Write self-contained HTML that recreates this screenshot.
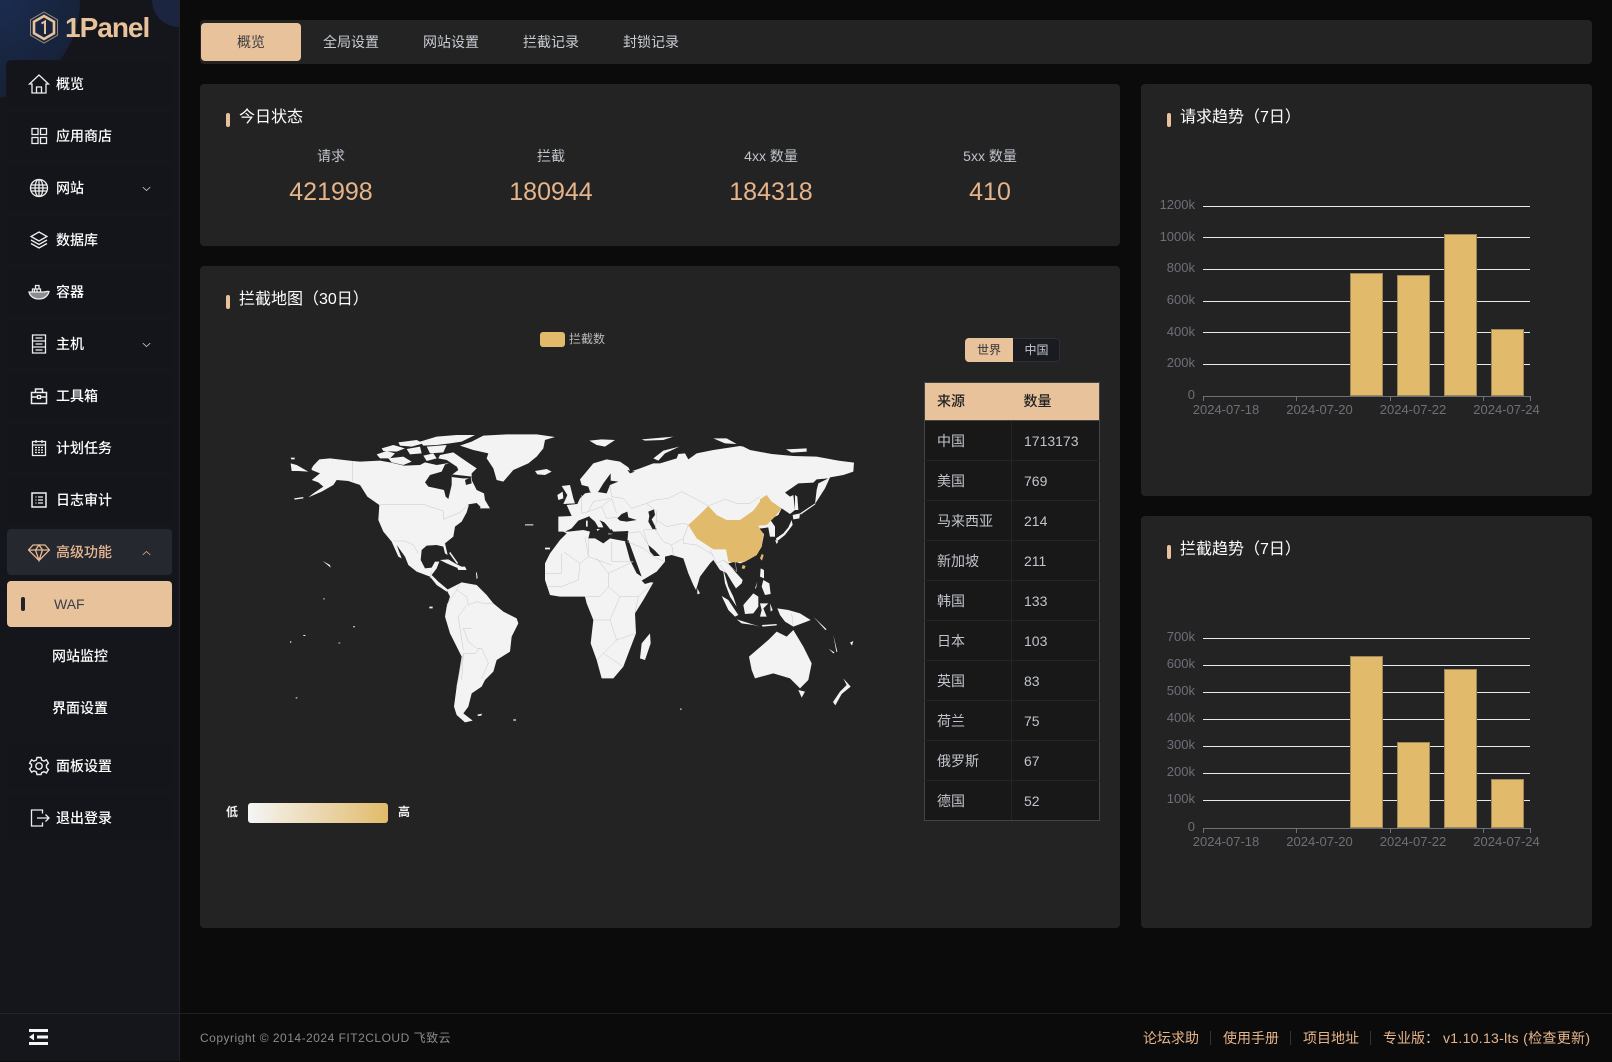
<!DOCTYPE html>
<html lang="zh"><head><meta charset="utf-8"><title>1Panel WAF</title>
<style>
*{box-sizing:border-box;margin:0;padding:0}
html,body{width:1612px;height:1061px;overflow:hidden;background:#0b0b0b;font-family:"Liberation Sans","Noto Sans CJK SC",sans-serif;font-size:14px;color:#fff}
.abs,.side,.card,.tabs,.m,.t{position:absolute}
.side{left:0;top:0;width:180px;height:1061px;background:#14161b;border-right:1px solid #22242a;overflow:hidden}
.blob1{position:absolute;left:-120px;top:-100px;width:200px;height:200px;border-radius:50%;background:radial-gradient(circle at 60% 50%,#1b2c50,#141a26)}
.blob2{position:absolute;left:152px;top:-27px;width:54px;height:54px;border-radius:50%;background:#1b2540}
.logo{position:absolute;left:65px;top:12px;font-size:28px;font-weight:bold;letter-spacing:-1px;color:#e8c29b;line-height:32px}
.m{left:7px;width:165px;height:46px;border-radius:4px;background:#13151a;box-shadow:0 0 0 1px #14171e;line-height:46px;padding-left:49px;color:#fff;font-weight:500}
.m svg.i{position:absolute;left:21px;top:12px;width:22px;height:22px;fill:none;stroke:#eee;stroke-width:1.3}
.m svg.c{position:absolute;left:135px;top:21px;width:9px;height:6px;fill:none;stroke:#ddd;stroke-width:1}
.m.adv{background:#26282f;color:#e8b992}.m.adv svg{stroke:#e8b992}
.m.waf{background:#e8c29b;color:#3a3f4a;font-weight:400;padding-left:47px}
.m.waf:before{content:"";position:absolute;left:14px;top:16px;width:4px;height:14px;border-radius:2px;background:#20232a}
.m.sub{background:none;box-shadow:none;padding-left:45px}
.tabs{left:200px;top:20px;width:1392px;height:44px;background:#232323;border-radius:4px}
.tab{position:absolute;top:3px;width:100px;height:38px;line-height:38px;text-align:center;color:#c8ccd4}
.tab.on{background:#e8c29b;color:#3b3b40;border-radius:4px}
.card{background:#232323;border-radius:4px}
.h{position:absolute;left:26px;top:23px;font-size:16px;line-height:22px;padding-left:13px;color:#fff;white-space:nowrap}
.h:before{content:"";position:absolute;left:0;top:6px;width:4px;height:14px;border-radius:2px;background:#e8c29b}
.stat{position:absolute;top:62px;width:220px;text-align:center}
.stat .l{color:#c0c4cc;line-height:20px}
.stat .v{color:#e6b48a;font-size:25px;line-height:30px;margin-top:11px}
table{position:absolute;left:924px;top:382px;width:176px;border-collapse:collapse;table-layout:fixed;background:#181818;color:#c0c4cc}
th{background:#e8c29b;color:#222;text-align:left;height:38px;padding:0 0 2px 12px;font-weight:500;border:1px solid #444;border-right:0;border-left:0}
th:first-child{border-left:1px solid #444}th:last-child{border-right:1px solid #444}
td{height:40px;padding-left:12px;border:1px solid #252525;line-height:38px}
td:first-child{border-left:1px solid #444}td:last-child{border-right:1px solid #444}
tr:last-child td{border-bottom:1px solid #444}
.foot{position:absolute;left:180px;top:1013px;width:1432px;height:48px;border-top:1px solid #1f1f1f;line-height:48px}
text{font-family:"Liberation Sans","Noto Sans CJK SC",sans-serif}
</style></head><body>

<div class="side">
<div class="blob1"></div><div class="blob2"></div>
<svg class="abs" style="left:29px;top:10px" width="30" height="35" viewBox="0 0 30 35" fill="none"><path d="M15 2 28.5 9.8V25.2L15 33 1.5 25.2V9.8Z" stroke="#9a8a78" stroke-width="1"/><path d="M15 6 25 11.8V23.2L15 29 5 23.2V11.8Z" stroke="#e8c29b" stroke-width="2.6"/><path d="M12.5 13.5 16 11.5V24" stroke="#e8c29b" stroke-width="2"/></svg>
<div class="logo">1Panel</div>

<div class="m" style="top:61px"><svg class="i" viewBox="0 0 22 22"><path d="M1.500 11 11 2l9.500 9h-2.500v9H4v-9ZM8.500 20v-6h5v6"/></svg>概览</div>
<div class="m" style="top:113px"><svg class="i" viewBox="0 0 22 22"><path d="M4 3.500h6v6H4zM12.500 3.500h6v6h-6zM4 12.500h6v6H4zM12.500 12.500h6v6h-6z"/></svg>应用商店</div>
<div class="m" style="top:165px"><svg class="i" viewBox="0 0 22 22"><circle cx="11" cy="11" r="8.500"/><ellipse cx="11" cy="11" rx="4" ry="8.500"/><path d="M11 2.500v17M3 8h16M3 14h16M2.500 11h17"/></svg>网站<svg class="c" viewBox="0 0 12 8"><path d="M1 1.500 6 6l5-4.500"/></svg></div>
<div class="m" style="top:217px"><svg class="i" viewBox="0 0 22 22"><path d="M11 3 19 7.500 11 12 3 7.500ZM3 11l8 4.500 8-4.500M3 14.500 11 19l8-4.500"/></svg>数据库</div>
<div class="m" style="top:269px"><svg class="i" viewBox="0 0 22 22" style="left:20px;width:24px"><path d="M1 11h15c1 0 2.500-1 5-.5-1 4.500-5 7.500-10 7.500-5 0-9-2.500-10-7Z" fill="#eee" fill-opacity=".55"/><path d="M4.500 10.500V8h8v2.500M7.500 8V4.500h3.500V8M6.500 8v2.500M9 8v2.500" stroke-width="1.300"/></svg>容器</div>
<div class="m" style="top:321px"><svg class="i" viewBox="0 0 22 22"><path d="M4.500 2h13v18h-13zM4.500 8h13M4.500 14h13M7.500 5h7M7.500 11h7M7.500 17h7"/></svg>主机<svg class="c" viewBox="0 0 12 8"><path d="M1 1.500 6 6l5-4.500"/></svg></div>
<div class="m" style="top:373px"><svg class="i" viewBox="0 0 22 22"><path d="M3.500 7.500h15v11h-15zM7.500 7.500v-3.500h7v3.500M3.500 12h15" stroke-width="1.500"/><path d="M9.500 10.500h3v3h-3z" fill="#14161b"/></svg>工具箱</div>
<div class="m" style="top:425px"><svg class="i" viewBox="0 0 22 22"><path d="M4.500 4.500h13v14h-13zM4.500 8h13M8 3v3M14 3v3"/><path d="M7 10.500h2M10 10.500h2M13 10.500h2M7 13h2M10 13h2M13 13h2M7 15.500h2M10 15.500h2M13 15.500h2" stroke-width="1.200"/></svg>计划任务</div>
<div class="m" style="top:477px"><svg class="i" viewBox="0 0 22 22"><path d="M4 4h14v14H4z" stroke-width="1.500"/><path d="M7.500 8h1M10 8h5M7.500 11h1M10 11h5M7.500 14h1M10 14h5"/></svg>日志审计</div>
<div class="m adv" style="top:529px"><svg class="i" viewBox="0 0 22 22"><path d="M5 4h12l4.500 5L11 19.500.5 9ZM.5 9h21M7.500 9 11 19.500 14.500 9 11 4 7.500 9"/></svg>高级功能<svg class="c" viewBox="0 0 12 8"><path d="M1 6.500 6 2l5 4.500"/></svg></div>
<div class="m waf" style="top:581px">WAF</div>
<div class="m sub" style="top:633px">网站监控</div>
<div class="m sub" style="top:685px">界面设置</div>
<div class="m" style="top:743px"><svg class="i" viewBox="0 0 22 22"><path d="M9 2.500h4l.7 2.600 2.400 1 2.300-1.300 2 3.400-1.900 1.900v2.600l1.900 1.900-2 3.400-2.300-1.300-2.400 1L13 19.500H9l-.7-2.600-2.400-1-2.300 1.300-2-3.400 1.900-1.900v-2.600L1.600 8.200l2-3.400 2.300 1.300 2.400-1Z" stroke-width="1.400"/><circle cx="11" cy="11" r="3.200" stroke-width="1.400"/></svg>面板设置</div>
<div class="m" style="top:795px"><svg class="i" viewBox="0 0 22 22"><path d="M14.500 6.500V3h-11v16h11v-3.500M9 11h12M17.500 7.500 21 11l-3.500 3.500"/></svg>退出登录</div>
<div class="abs" style="left:0;top:1013px;width:180px;height:1px;background:#22242a"></div>
<svg class="abs" style="left:29px;top:1029px" width="20" height="17" viewBox="0 0 20 17" fill="#f5f5f5"><path d="M0 0h19v3H0zM0 13h19v3H0zM8 6.500h11v3H8zM5 4.500v7L0 8Z"/></svg>
</div>

<div class="tabs">
<div class="tab on" style="left:1px">概览</div><div class="tab" style="left:101px">全局设置</div><div class="tab" style="left:201px">网站设置</div><div class="tab" style="left:301px">拦截记录</div><div class="tab" style="left:401px">封锁记录</div>
</div>

<div class="card" style="left:200px;top:84px;width:920px;height:162px">
<div class="h">今日状态</div>
<div class="stat" style="left:21px"><div class="l">请求</div><div class="v">421998</div></div>
<div class="stat" style="left:241px"><div class="l">拦截</div><div class="v">180944</div></div>
<div class="stat" style="left:461px"><div class="l">4xx 数量</div><div class="v">184318</div></div>
<div class="stat" style="left:680px"><div class="l">5xx 数量</div><div class="v">410</div></div>
</div>

<div class="card" style="left:200px;top:266px;width:920px;height:662px">
<div class="h">拦截地图（30日）</div>
</div>

<div class="abs" style="left:540px;top:332px;width:25px;height:15px;border-radius:3px;background:#e1bb6b"></div>
<div class="abs" style="left:569px;top:331px;font-size:12px;line-height:16px;color:#bbb">拦截数</div>
<div class="abs" style="left:965px;top:338px;width:95px;height:24px;border:1px solid #2c2f36;border-radius:4px;background:#191b20;font-size:12px;line-height:22px;color:#c0c4cc;text-align:center;padding-left:48px">中国</div>
<div class="abs" style="left:965px;top:338px;width:48px;height:24px;border-radius:4px 0 0 4px;background:#e8c29b;font-size:12px;line-height:24px;color:#333;text-align:center">世界</div>

<!-- map -->
<svg class="abs" style="left:280px;top:420px;filter:blur(.3px)" width="600" height="320" viewBox="0 0 600 320" fill="#f3f3f3">
<g transform="translate(0,5) scale(.33333)">
 <path d="M95 130 100 122 118 103 150 100 218 108 240 110 300 107 330 112 372 122 420 120 435 112 470 120 500 115 530 118 560 120 590 130 575 145 575 165 590 195 612 205 615 225 630 250 600 250 590 240 565 245 560 262 545 290 525 305 520 335 495 355 503 390 495 385 490 365 470 360 440 362 425 375 422 405 435 430 455 428 465 410 478 410 470 430 455 450 475 470 505 495 500 500 470 480 450 455 410 440 385 420 375 395 350 360 365 400 355 395 335 350 310 320 295 285 298 240 262 215 240 180 205 168 170 165 160 180 125 200 85 217 100 205 130 185 115 172 95 165 120 145 95 135Z"/>
 <path fill="#232323" d="M435 172 450 150 485 140 495 118 525 112 535 135 515 150 515 180 505 222 497 215 492 195 470 190 445 185Z"/>
 <path fill="#232323" d="M555 165 572 158 575 175 558 180ZM565 238 590 234 602 246 590 262 570 262ZM515 148 550 152 575 155 572 160 548 160 515 156Z"/>
 <path d="M290 88 320 78 345 85 330 100 300 100ZM305 70 340 60 375 70 350 80 310 78ZM325 100 370 95 395 110 370 120 335 112ZM355 52 410 45 430 55 395 65 360 62ZM380 72 420 65 425 85 390 88ZM420 50 470 35 530 30 585 30 545 50 510 55 470 60 430 62ZM440 65 500 60 490 82 450 85ZM430 92 460 85 470 100 440 108ZM480 90 520 82 560 110 590 130 565 135 530 125 500 105 475 100Z"/>
 <path d="M540 62 575 50 610 32 680 28 770 28 825 36 795 45 790 70 770 95 745 115 700 135 670 170 650 165 640 130 620 100 625 85 580 75Z"/>
 <path d="M765 138 800 132 815 140 795 150 772 148ZM32 115 50 120 85 140 55 138 35 138ZM32 98H44V103H34ZM42 220 70 216 70 220 44 224Z"/>
 <path d="M480 405 505 403 525 415 555 430 530 428 500 415ZM530 425 555 425 560 435 535 435ZM510 380 535 415 530 416 508 385ZM128 408 150 420 152 428 145 422ZM590 440l3 18-3 5-2-18ZM735 298h25v3h-25zM795 368h15v5h-15z"/>
 <g fill="none" stroke="#c8c8c8" stroke-width="1.500"><path d="M218 108V168M300 238H430L490 258 490 283 540 262 565 240M340 348H375L400 360 415 385M455 440 450 460"/></g>
</g>
<g transform="scale(.33333)">
 <path d="M500 510 520 500 545 487 590 495 620 525 640 550 670 575 710 595 715 610 695 650 690 695 650 720 640 755 615 780 605 800 575 820 565 860 550 880 578 902 555 907 530 885 522 860 530 800 545 710 510 640 495 590 500 560 510 530Z"/>
 <path d="M592 884 606 881 604 887 594 888ZM700 898h8v4h-8zM448 560h10v5h-10zM47 832h5v3h-5zM70 645h6v3h-6zM30 664h4v4h-4zM175 668h6v2h-6zM220 618h4v4h-4zM130 535h4v3h-4z"/>
 <g fill="none" stroke="#c8c8c8" stroke-width="1.500"><path d="M540 490 530 510 560 530 565 555 590 545 610 550 640 550M530 510 500 555M560 555 535 590 540 625 550 690M575 625 550 625 565 665 590 685 605 685 625 730 605 775M600 685 585 700 550 700 545 780M550 700 530 800"/></g>
</g>
<g transform="translate(260,10) scale(.33333)">
 <path d="M80 225 112 222 120 205 135 190 165 185 200 190 210 165 235 155 212 152 212 130 190 160 175 185 160 190 150 185 145 170 125 165 120 148 160 100 200 88 240 95 265 112 272 125 300 115 340 100 360 100 410 85 415 72 435 70 445 88 470 70 520 60 600 48 610 50 630 60 695 72 760 78 830 80 895 92 942 98 940 125 910 135 870 142 855 175 825 222 830 180 835 160 865 145 830 148 820 158 775 160 735 188 750 200 760 195 765 240 750 252 725 235 715 255 690 268 705 290 705 320 690 320 685 292 665 295 650 295 672 312 665 350 650 375 615 395 600 400 585 395 565 400 585 425 608 450 605 460 588 475 575 455 560 430 552 425 565 470 580 500 590 530 570 500 555 460 550 425 540 420 520 390 510 400 480 440 468 480 460 465 445 430 430 385 395 375 375 380 375 395 350 425 305 452 340 458 310 510 285 550 288 610 265 670 250 710 220 745 185 745 170 690 152 640 160 570 140 520 135 500 100 500 60 500 30 495 15 450 15 400 30 370 60 330 80 310 70 305 55 305 55 260 95 258Z"/>
 <path fill="#232323" d="M75 305 95 295 115 272 150 258 200 280 220 305 265 303 262 335 235 330 210 325 190 340 165 325 145 325 150 305 130 300 85 305ZM232 265 245 252 262 245 265 262 290 270 260 275 240 272ZM325 245 342 238 345 255 335 268 350 298 338 298 325 275 328 258ZM325 345 345 362 360 378 342 378 330 365ZM255 335 265 330 285 385 305 440 290 430 270 390ZM305 452 350 445 355 450 315 462ZM262 120 285 125 270 130Z"/>
 <path d="M145 252 165 250 185 280 190 292 175 292 165 275 150 262ZM170 255 205 262 220 275 212 300 200 285 180 262ZM170 297H180L172 303ZM138 272H143V290H138ZM205 310 220 312 205 313Z"/>
 <path d="M65 168 90 165 100 205 105 220 70 222 82 195ZM52 195 68 185 70 205 55 210Z"/>
 <path d="M340 85 370 62 418 50 375 70 355 92ZM148 32 185 28 225 30 195 50 170 45ZM305 28 400 20 370 30 315 32ZM520 25 560 25 590 42 555 40ZM738 58 800 55 800 65 755 68Z"/>
 <g fill="none" stroke="#c8c8c8" stroke-width="1.500"><path d="M210 165 215 200 250 205 275 235 320 220 345 210 385 205 425 185 470 208 505 228 555 208 590 220 630 220 660 200M320 220 350 245 350 270 380 290 430 280 445 285M350 270 345 298 370 335 395 345 430 325 445 285M345 298 310 300 325 345M395 345 400 375M430 325 430 340 470 345 520 375M262 310 300 305 325 345M262 335 310 355 340 380 375 395M125 195 125 250 145 245 185 230 215 205M145 245 160 215 210 205M185 230 200 265 235 262M230 250 215 205M215 335 215 395 280 395M145 325 145 380 215 405M135 320 145 380 120 400 70 365M65 370 65 430 15 430M120 400 115 450 65 470 25 470M170 385 205 430 205 470 180 500 140 500M205 430 280 395M205 470 240 500 295 500 340 458M240 500 210 570 160 570M210 570 230 630 288 610M230 630 190 670 250 710M190 670 170 690M295 500 285 550"/></g>
</g>
<g transform="translate(420,20) scale(.33333)">
 <path d="M285 165 292 170 295 210 285 210ZM278 225 300 220 298 235 280 238ZM275 240 278 255 255 285 230 305 228 295 250 280 265 262ZM225 300 235 305 230 312ZM210 250 225 260 225 290 210 290 205 262Z"/>
 <path d="M182 385 192 390 192 415 180 410ZM190 420 208 430 212 462 195 465 185 440ZM172 425 165 445 168 445ZM130 495 160 460 175 470 175 500 160 520 135 522ZM180 490 205 490 190 505 200 530 180 530 185 510ZM65 468 85 480 115 525 105 530 85 510ZM110 538 180 560 160 555 125 550ZM185 555 230 552 230 556 188 560ZM210 490 218 510 212 515ZM232 505 265 510 300 520 332 540 320 545 280 560 255 545 240 525ZM340 530 380 568 376 570ZM300 220 345 190 346 193 302 224Z"/>
 <g fill="none" stroke="#c8c8c8" stroke-width="1.500"><path d="M30 330 50 370 70 360 85 370M60 375 80 400M70 360 110 395 105 360M275 520 280 560"/></g>
</g>
<g transform="translate(280,0) scale(.33333)">
 <path d="M412 505 420 520 412 523ZM270 640 272 670 255 720 240 715 245 670Z"/>
 <path d="M567 710 590 690 625 660 650 635 680 650 700 630 730 680 755 730 745 780 720 805 690 775 640 760 585 775 575 750Z"/>
 <path d="M715 810 735 815 725 833ZM850 775 872 800 845 822 826 856 819 846 840 815 860 795ZM820 645l12 50-3 1zM806 686l18 12-4 2zM870 668l10-5-4 14zM360 866h5v3h-5z"/>
</g>
<g transform="translate(260,10) scale(.33333)" fill="#e1bb6b">
 <path d="M445 285 470 262 505 228 530 255 560 270 600 270 640 242 660 215 660 208 680 195 695 215 725 235 705 260 680 285 655 287 662 300 670 310 665 350 650 375 615 395 585 397 565 395 558 358 520 358 470 325Z"/>
 <path d="M665 372 671 375 666 392 660 385ZM608 405 617 408 613 417 605 415Z"/>
</g>
</svg>

<div class="abs" style="left:226px;top:804px;font-size:12px;line-height:16px;color:#eee;font-weight:700">低</div>
<div class="abs" style="left:248px;top:803px;width:140px;height:20px;border-radius:3px;background:linear-gradient(90deg,#f5f5f5,#e1bb6b)"></div>
<div class="abs" style="left:398px;top:804px;font-size:12px;line-height:16px;color:#eee;font-weight:700">高</div>

<table>
<colgroup><col style="width:87px"><col></colgroup>
<tr><th>来源</th><th>数量</th></tr>
<tr><td>中国</td><td>1713173</td></tr>
<tr><td>美国</td><td>769</td></tr>
<tr><td>马来西亚</td><td>214</td></tr>
<tr><td>新加坡</td><td>211</td></tr>
<tr><td>韩国</td><td>133</td></tr>
<tr><td>日本</td><td>103</td></tr>
<tr><td>英国</td><td>83</td></tr>
<tr><td>荷兰</td><td>75</td></tr>
<tr><td>俄罗斯</td><td>67</td></tr>
<tr><td>德国</td><td>52</td></tr>
</table>

<div class="card" style="left:1141px;top:84px;width:451px;height:412px"><div class="h">请求趋势（7日）</div></div>
<div class="card" style="left:1141px;top:516px;width:451px;height:412px"><div class="h">拦截趋势（7日）</div></div>

<svg class="abs" style="left:1141px;top:84px" width="451" height="412" viewBox="1141 84 451 412">
<g stroke="#e6e9f0" stroke-width="1"><path d="M1203 206.500H1530M1203 237.500H1530M1203 269.500H1530M1203 301.500H1530M1203 332.500H1530M1203 364.500H1530"/></g>
<g fill="#e1bb6b" stroke="#9d8757" stroke-width="1"><rect x="1350.500" y="273.500" width="32" height="122"/><rect x="1397.500" y="275.500" width="32" height="120"/><rect x="1444.500" y="234.500" width="32" height="161"/><rect x="1491.500" y="329.500" width="32" height="66"/></g>
<path d="M1203 396.500H1530M1203.500 396v5M1296.500 396v5M1390.500 396v5M1483.500 396v5M1530.500 396v5" stroke="#6e7079" fill="none"/>
<g fill="#6e7079" font-size="13" text-anchor="end"><text x="1195" y="209">1200k</text><text x="1195" y="241">1000k</text><text x="1195" y="272">800k</text><text x="1195" y="304">600k</text><text x="1195" y="336">400k</text><text x="1195" y="367">200k</text><text x="1195" y="399">0</text></g>
<g fill="#6e7079" font-size="13" text-anchor="middle"><text x="1226" y="414">2024-07-18</text><text x="1319.500" y="414">2024-07-20</text><text x="1413" y="414">2024-07-22</text><text x="1506.500" y="414">2024-07-24</text></g>
</svg>

<svg class="abs" style="left:1141px;top:516px" width="451" height="412" viewBox="1141 516 451 412">
<g stroke="#e6e9f0" stroke-width="1"><path d="M1203 638.500H1530M1203 665.500H1530M1203 692.500H1530M1203 719.500H1530M1203 746.500H1530M1203 773.500H1530M1203 800.500H1530"/></g>
<g fill="#e1bb6b" stroke="#9d8757" stroke-width="1"><rect x="1350.500" y="656.500" width="32" height="171"/><rect x="1397.500" y="742.500" width="32" height="85"/><rect x="1444.500" y="669.500" width="32" height="158"/><rect x="1491.500" y="779.500" width="32" height="48"/></g>
<path d="M1203 828.500H1530M1203.500 828v5M1296.500 828v5M1390.500 828v5M1483.500 828v5M1530.500 828v5" stroke="#6e7079" fill="none"/>
<g fill="#6e7079" font-size="13" text-anchor="end"><text x="1195" y="641">700k</text><text x="1195" y="668">600k</text><text x="1195" y="695">500k</text><text x="1195" y="722">400k</text><text x="1195" y="749">300k</text><text x="1195" y="776">200k</text><text x="1195" y="803">100k</text><text x="1195" y="831">0</text></g>
<g fill="#6e7079" font-size="13" text-anchor="middle"><text x="1226" y="846">2024-07-18</text><text x="1319.500" y="846">2024-07-20</text><text x="1413" y="846">2024-07-22</text><text x="1506.500" y="846">2024-07-24</text></g>
</svg>

<div class="foot">
<div class="abs" style="left:20px;top:0;font-size:12px;letter-spacing:.5px;color:#8a8a8a">Copyright © 2014-2024 FIT2CLOUD 飞致云</div>
<div class="abs" style="left:963px;top:0;color:#e6b48a">论坛求助</div>
<div class="abs" style="left:1030px;top:17px;width:1px;height:14px;background:#333"></div>
<div class="abs" style="left:1043px;top:0;color:#e6b48a">使用手册</div>
<div class="abs" style="left:1110px;top:17px;width:1px;height:14px;background:#333"></div>
<div class="abs" style="left:1123px;top:0;color:#e6b48a">项目地址</div>
<div class="abs" style="left:1190px;top:17px;width:1px;height:14px;background:#333"></div>
<div class="abs" style="left:1203px;top:0;color:#e6b48a;white-space:nowrap">专业版：<span style="margin-left:4px;letter-spacing:.3px">v1.10.13-lts (检查更新)</span></div>
</div>
</body></html>
